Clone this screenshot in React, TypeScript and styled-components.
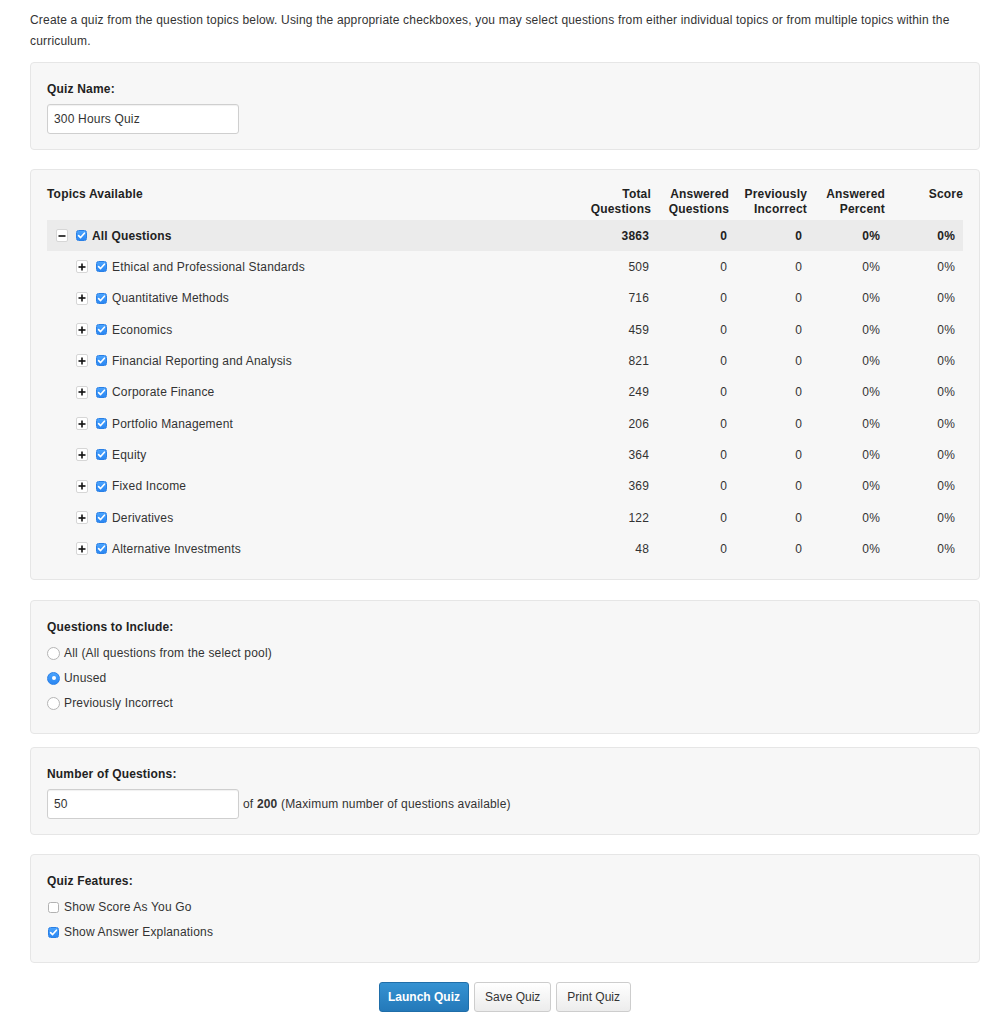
import React from 'react'
import styled, { createGlobalStyle, css } from 'styled-components'

const GlobalStyle = createGlobalStyle`
  body {
    margin: 0;
    background: #fff;
    color: #333;
    font: 12px 'Liberation Sans', Arial, Helvetica, sans-serif;
    letter-spacing: 0.18px;
  }
`

const Page = styled.div`
  width: 950px;
  padding: 10px 20px 20px 30px;
`

const Intro = styled.p`
  margin: 0 0 10px;
  line-height: 21px;
`

const Well = styled.section<{ $after?: number; $top?: number; $bottom?: number }>`
  background: #f7f7f7;
  border: 1px solid #e6e6e6;
  border-radius: 4px;
  padding: ${p => p.$top ?? 18}px 16px ${p => p.$bottom ?? 15}px;
  margin-bottom: ${p => p.$after ?? 19}px;
`

const FieldLabel = styled.div`
  font-weight: bold;
  color: #222;
  line-height: 17px;
  margin-bottom: 6px;
`

const TextInput = styled.input`
  box-sizing: border-box;
  width: 192px;
  height: 30px;
  padding: 0 6px;
  border: 1px solid #cfcfcf;
  border-radius: 3px;
  background: #fff;
  box-shadow: inset 0 1px 1px rgba(0, 0, 0, 0.06);
  font: inherit;
  letter-spacing: inherit;
  color: #333;
  outline: none;
`

const InlineField = styled.div`
  display: flex;
  align-items: center;
  gap: 4px;
`

// topics table

const COLUMNS = ['Total|Questions', 'Answered|Questions', 'Previously|Incorrect', 'Answered|Percent', 'Score']
const DATA_PAD = [2, 2, 5, 5, 8]

const TopicGrid = styled.div`
  display: grid;
  grid-template-columns: 526px repeat(5, 78px);
`

const HeadCell = styled.div<{ $right?: boolean }>`
  font-weight: bold;
  color: #222;
  line-height: 15px;
  padding-bottom: 3px;
  text-align: ${p => (p.$right ? 'right' : 'left')};
`

const Row = styled.div<{ $root?: boolean }>`
  display: contents;
  ${p =>
    p.$root &&
    css`
      & > div {
        background: #ebebeb;
        font-weight: bold;
        color: #222;
      }
    `}
`

const Cell = styled.div<{ $pad?: number }>`
  height: 31.33px;
  display: flex;
  align-items: center;
  justify-content: flex-end;
  padding-right: ${p => p.$pad ?? 0}px;
`

const NameCell = styled.div<{ $depth: number }>`
  height: 31.33px;
  display: flex;
  align-items: center;
  padding-left: ${p => 9 + p.$depth * 20}px;
`

const Toggle = styled.span`
  box-sizing: border-box;
  width: 12px;
  height: 13px;
  border: 1px solid #d6d6d6;
  border-radius: 2px;
  background: #fff;
  display: flex;
  align-items: center;
  justify-content: center;
  margin-right: 8px;
`

const Check = styled.span<{ $on?: boolean }>`
  box-sizing: border-box;
  width: 11px;
  height: 11px;
  border-radius: 2.5px;
  display: flex;
  align-items: center;
  justify-content: center;
  flex: none;
  ${p =>
    p.$on
      ? css`
          background: linear-gradient(#4aa3fd, #2b87f2);
          border: 1px solid #2a80e6;
        `
      : css`
          background: #fff;
          border: 1px solid #b2b2b2;
        `}
`

const Radio = styled.span<{ $on?: boolean }>`
  box-sizing: border-box;
  width: 13px;
  height: 13px;
  border-radius: 50%;
  display: flex;
  align-items: center;
  justify-content: center;
  ${p =>
    p.$on
      ? css`
          background: linear-gradient(#4aa3fd, #2b87f2);
          border: 1px solid #2a80e6;
          &::after {
            content: '';
            width: 4px;
            height: 4px;
            border-radius: 50%;
            background: #fff;
          }
        `
      : css`
          background: #fff;
          border: 1px solid #b5b5b5;
        `}
`

const CheckGap = styled.span`
  margin-right: 5px;
  display: flex;
`

// option lists

const OptionList = styled.div`
  margin: -1px 0 2px;
`

const Option = styled.div`
  display: flex;
  align-items: center;
  height: 25px;
  gap: 4px;
`

const Mark = styled.span`
  width: 13px;
  display: flex;
  justify-content: center;
`

const Buttons = styled.div`
  display: flex;
  justify-content: center;
  gap: 5px;
`

const Button = styled.button<{ $primary?: boolean }>`
  height: 30px;
  border-radius: 3px;
  font: inherit;
  letter-spacing: 0;
  cursor: pointer;
  ${p =>
    p.$primary
      ? css`
          padding: 0 8px;
          background: linear-gradient(#3592d2, #2479b9);
          border: 1px solid #1f6ea9;
          color: #fff;
          font-weight: bold;
        `
      : css`
          padding: 0 10px;
          background: linear-gradient(#fff, #ececec);
          border: 1px solid #cdcdcd;
          color: #333;
        `}
`

const Tick = () => (
  <svg width="9" height="9" viewBox="0 0 9 9">
    <path d="M1.6 4.6 L3.6 6.6 L7.4 2.2" fill="none" stroke="#fff" strokeWidth="1.6" strokeLinecap="round" strokeLinejoin="round" />
  </svg>
)

const PlusMinus = ({ open }: { open?: boolean }) => (
  <svg width="8" height="8" viewBox="0 0 8 8">
    <path d="M0.5 4 H7.5" stroke="#111" strokeWidth="1.6" />
    {!open && <path d="M4 0.5 V7.5" stroke="#111" strokeWidth="1.6" />}
  </svg>
)

interface Topic {
  name: string
  total: number
}

const topics: Topic[] = [
  { name: 'Ethical and Professional Standards', total: 509 },
  { name: 'Quantitative Methods', total: 716 },
  { name: 'Economics', total: 459 },
  { name: 'Financial Reporting and Analysis', total: 821 },
  { name: 'Corporate Finance', total: 249 },
  { name: 'Portfolio Management', total: 206 },
  { name: 'Equity', total: 364 },
  { name: 'Fixed Income', total: 369 },
  { name: 'Derivatives', total: 122 },
  { name: 'Alternative Investments', total: 48 },
]

const TopicRow = ({ name, total, depth, root }: Topic & { depth: number; root?: boolean }) => {
  const values = [String(total), '0', '0', '0%', '0%']
  return (
    <Row $root={root}>
      <NameCell $depth={depth}>
        <Toggle>
          <PlusMinus open={root} />
        </Toggle>
        <CheckGap>
          <Check $on>
            <Tick />
          </Check>
        </CheckGap>
        {name}
      </NameCell>
      {values.map((v, i) => (
        <Cell key={i} $pad={DATA_PAD[i]}>
          {v}
        </Cell>
      ))}
    </Row>
  )
}

const App: React.FunctionComponent = () => {
  const total = topics.reduce((sum, t) => sum + t.total, 0)

  return (
    <Page>
      <GlobalStyle />
      <Intro>
        Create a quiz from the question topics below. Using the appropriate checkboxes, you may select questions from
        either individual topics or from multiple topics within the curriculum.
      </Intro>

      <Well>
        <FieldLabel>Quiz Name:</FieldLabel>
        <TextInput defaultValue="300 Hours Quiz" />
      </Well>

      <Well $top={17} $bottom={14} $after={20}>
        <TopicGrid>
          <HeadCell>Topics Available</HeadCell>
          {COLUMNS.map(c => (
            <HeadCell key={c} $right>
              {c.split('|').map((part, i) => (
                <div key={i}>{part}</div>
              ))}
            </HeadCell>
          ))}
          <TopicRow name="All Questions" total={total} depth={0} root />
          {topics.map(t => (
            <TopicRow key={t.name} {...t} depth={1} />
          ))}
        </TopicGrid>
      </Well>

      <Well $after={13}>
        <FieldLabel>Questions to Include:</FieldLabel>
        <OptionList>
          <Option>
            <Mark>
              <Radio />
            </Mark>
            All (All questions from the select pool)
          </Option>
          <Option>
            <Mark>
              <Radio $on />
            </Mark>
            Unused
          </Option>
          <Option>
            <Mark>
              <Radio />
            </Mark>
            Previously Incorrect
          </Option>
        </OptionList>
      </Well>

      <Well>
        <FieldLabel>Number of Questions:</FieldLabel>
        <InlineField>
          <TextInput defaultValue="50" />
          <span>
            of <b>200</b> (Maximum number of questions available)
          </span>
        </InlineField>
      </Well>

      <Well>
        <FieldLabel>Quiz Features:</FieldLabel>
        <OptionList>
          <Option>
            <Mark>
              <Check />
            </Mark>
            Show Score As You Go
          </Option>
          <Option>
            <Mark>
              <Check $on>
                <Tick />
              </Check>
            </Mark>
            Show Answer Explanations
          </Option>
        </OptionList>
      </Well>

      <Buttons>
        <Button $primary>Launch Quiz</Button>
        <Button>Save Quiz</Button>
        <Button>Print Quiz</Button>
      </Buttons>
    </Page>
  )
}

export default App
